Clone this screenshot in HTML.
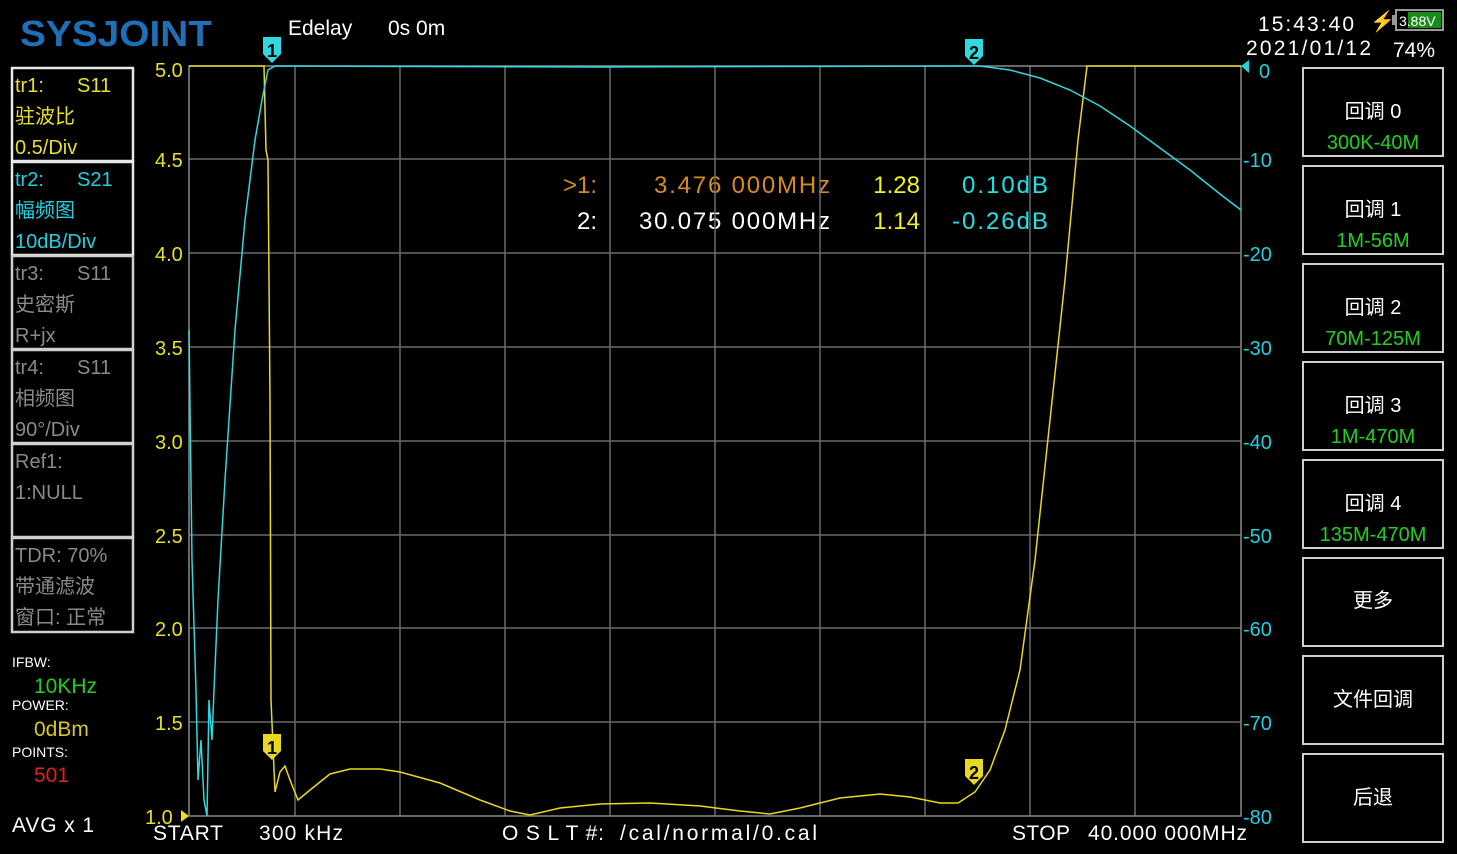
<!DOCTYPE html>
<html><head><meta charset="utf-8"><style>
html,body{margin:0;padding:0;background:#000;width:1457px;height:854px;overflow:hidden}
svg{display:block}
text{font-family:"Liberation Sans","Noto Sans CJK SC",sans-serif}
</style></head><body>
<svg width="1457" height="854" viewBox="0 0 1457 854" xmlns="http://www.w3.org/2000/svg">
<rect width="1457" height="854" fill="#000"/>
<text x="20" y="46" font-size="36" font-weight="bold" fill="#1f6fb8" textLength="192" lengthAdjust="spacingAndGlyphs">SYSJOINT</text>
<text x="288" y="35" font-size="21" fill="#fff">Edelay</text>
<text x="388" y="35" font-size="21" fill="#fff">0s 0m</text>
<text x="1258" y="31" font-size="21" fill="#fff" textLength="96">15:43:40</text>
<text x="1246" y="55" font-size="21" fill="#fff" textLength="125">2021/01/12</text>
<text x="1393" y="57" font-size="21" fill="#fff">74%</text>
<text x="1370" y="28" font-size="20" fill="#f5c020">⚡</text>
<rect x="1396" y="10" width="47" height="20" fill="none" stroke="#999" stroke-width="2"/>
<rect x="1392" y="15" width="4" height="10" fill="#999"/>
<rect x="1408" y="12" width="33" height="16" fill="#1a8a1a"/>
<text x="1399" y="26" font-size="14" fill="#fff">3.88V</text>

<g font-size="24">
<text x="597" y="193" text-anchor="end" fill="#d88a20">&gt;1:</text>
<text x="830" y="193" text-anchor="end" fill="#d88a20" textLength="176">3.476 000MHz</text>
<text x="920" y="193" text-anchor="end" fill="#f0f020">1.28</text>
<text x="1048" y="193" text-anchor="end" fill="#20e0e8" textLength="86">0.10dB</text>
<text x="597" y="229" text-anchor="end" fill="#fff">2:</text>
<text x="830" y="229" text-anchor="end" fill="#fff" textLength="191">30.075 000MHz</text>
<text x="920" y="229" text-anchor="end" fill="#f0f020">1.14</text>
<text x="1048" y="229" text-anchor="end" fill="#20e0e8" textLength="96">-0.26dB</text>
</g>

<g stroke="#6a6a6a" stroke-width="1.5">
<line x1="295" y1="66" x2="295" y2="816"/><line x1="400" y1="66" x2="400" y2="816"/>
<line x1="505" y1="66" x2="505" y2="816"/><line x1="610" y1="66" x2="610" y2="816"/>
<line x1="715" y1="66" x2="715" y2="816"/><line x1="820" y1="66" x2="820" y2="816"/>
<line x1="925" y1="66" x2="925" y2="816"/><line x1="1030" y1="66" x2="1030" y2="816"/>
<line x1="1135" y1="66" x2="1135" y2="816"/>
<line x1="189" y1="159" x2="1241" y2="159"/><line x1="189" y1="253" x2="1241" y2="253"/>
<line x1="189" y1="347" x2="1241" y2="347"/><line x1="189" y1="441" x2="1241" y2="441"/>
<line x1="189" y1="535" x2="1241" y2="535"/><line x1="189" y1="628" x2="1241" y2="628"/>
<line x1="189" y1="722" x2="1241" y2="722"/>
</g>
<rect x="189" y="66" width="1052" height="750" fill="none" stroke="#8a8a8a" stroke-width="1.5"/>

<g font-size="20" fill="#e8e020">
<text x="155" y="77">5.0</text><text x="155" y="167">4.5</text><text x="155" y="261">4.0</text>
<text x="155" y="355">3.5</text><text x="155" y="449">3.0</text><text x="155" y="543">2.5</text>
<text x="155" y="636">2.0</text><text x="155" y="730">1.5</text><text x="145" y="824">1.0</text>
</g>
<path d="M181 810 L189 816 L181 822Z" fill="#e8e020"/>
<g font-size="20" fill="#20d0e0">
<text x="1259" y="78">0</text><text x="1243" y="167">-10</text><text x="1243" y="261">-20</text>
<text x="1243" y="355">-30</text><text x="1243" y="449">-40</text><text x="1243" y="543">-50</text>
<text x="1243" y="636">-60</text><text x="1243" y="730">-70</text><text x="1243" y="824">-80</text>
</g>
<path d="M1249 60 L1241 66 L1249 73Z" fill="#20d0e0"/>

<path d="M189 66 L264 66 L266 150 L268 160 L270 400 L271 700 L275 792 L280 772 L285 766 L290 780 L298 800 L310 790 L330 774 L350 769 L380 769 L400 772 L440 783 L480 800 L510 811 L530 815 L560 808 L600 804 L650 803 L700 806 L740 811 L770 814 L800 808 L840 798 L880 794 L910 797 L940 803 L958 803 L975 792 L990 770 L1005 730 L1020 670 L1035 560 L1050 420 L1065 280 L1078 140 L1087 66 L1241 66" fill="none" stroke="#e8d820" stroke-width="1.5"/>
<path d="M189 330 L192 560 L196 690 L198 780 L201 740 L204 800 L207 816 L209 700 L212 740 L214 690 L218 600 L225 480 L235 330 L245 220 L255 140 L262 100 L268 70 L275 66 L600 67 L960 66 L980 66 L1010 70 L1040 78 L1070 90 L1100 106 L1130 126 L1160 148 L1190 170 L1220 194 L1241 210" fill="none" stroke="#30d8e0" stroke-width="1.5"/>

<g font-size="18" font-weight="bold" fill="#000" text-anchor="middle">
<path d="M263 37 h18 v17 l-9 9 l-9 -9z" fill="#30d8e0"/><text x="272" y="57">1</text>
<path d="M965 39 h18 v17 l-9 9 l-9 -9z" fill="#30d8e0"/><text x="974" y="59">2</text>
<path d="M263 734 h18 v17 l-9 9 l-9 -9z" fill="#e8d820"/><text x="272" y="754">1</text>
<path d="M965 759 h18 v17 l-9 9 l-9 -9z" fill="#e8d820"/><text x="974" y="779">2</text>
</g>

<g font-size="21" fill="#fff">
<text x="153" y="840" textLength="70">START</text><text x="259" y="840" textLength="84">300 kHz</text>
<text x="502" y="840" textLength="102">O S L T #:</text><text x="620" y="840" textLength="197">/cal/normal/0.cal</text>
<text x="1012" y="840" textLength="58">STOP</text><text x="1088" y="840" textLength="159">40.000 000MHz</text>
<text x="12" y="832" textLength="82">AVG x 1</text>
</g>

<g fill="none" stroke="#e8e8e8" stroke-width="2.5">
<rect x="12" y="68" width="121" height="93"/>
<rect x="12" y="162" width="121" height="93"/>
</g>
<g fill="none" stroke="#cfcfcf" stroke-width="2.5">
<rect x="12" y="256" width="121" height="93"/>
<rect x="12" y="350" width="121" height="93"/>
<rect x="12" y="444" width="121" height="93"/>
<rect x="12" y="538" width="121" height="94"/>
</g>
<g font-size="20">
<text x="15" y="92" fill="#e8e020">tr1:</text><text x="77" y="92" fill="#e8e020">S11</text>
<text x="15" y="123" fill="#e8e020">驻波比</text>
<text x="15" y="154" fill="#e8e020">0.5/Div</text>
<text x="15" y="186" fill="#20d0e0">tr2:</text><text x="77" y="186" fill="#20d0e0">S21</text>
<text x="15" y="217" fill="#20d0e0">幅频图</text>
<text x="15" y="248" fill="#20d0e0">10dB/Div</text>
<text x="15" y="280" fill="#8a8a8a">tr3:</text><text x="77" y="280" fill="#8a8a8a">S11</text>
<text x="15" y="311" fill="#8a8a8a">史密斯</text>
<text x="15" y="342" fill="#8a8a8a">R+jx</text>
<text x="15" y="374" fill="#8a8a8a">tr4:</text><text x="77" y="374" fill="#8a8a8a">S11</text>
<text x="15" y="405" fill="#8a8a8a">相频图</text>
<text x="15" y="436" fill="#8a8a8a">90°/Div</text>
<text x="15" y="468" fill="#8a8a8a">Ref1:</text>
<text x="15" y="499" fill="#8a8a8a">1:NULL</text>
<text x="15" y="562" fill="#8a8a8a">TDR: 70%</text>
<text x="15" y="593" fill="#8a8a8a">带通滤波</text>
<text x="15" y="624" fill="#8a8a8a">窗口: 正常</text>
</g>
<g font-size="14" fill="#fff">
<text x="12" y="667">IFBW:</text><text x="12" y="710">POWER:</text><text x="12" y="757">POINTS:</text>
</g>
<text x="34" y="693" font-size="21" fill="#20d020">10KHz</text>
<text x="34" y="736" font-size="21" fill="#d8c820">0dBm</text>
<text x="34" y="782" font-size="21" fill="#e02020">501</text>

<g fill="none" stroke="#d0d0d0" stroke-width="2">
<rect x="1303" y="68" width="140" height="88"/><rect x="1303" y="166" width="140" height="88"/>
<rect x="1303" y="264" width="140" height="88"/><rect x="1303" y="362" width="140" height="88"/>
<rect x="1303" y="460" width="140" height="88"/><rect x="1303" y="558" width="140" height="88"/>
<rect x="1303" y="656" width="140" height="88"/><rect x="1303" y="754" width="140" height="88"/>
</g>
<g font-size="20" text-anchor="middle">
<text x="1373" y="118" fill="#fff">回调 0</text><text x="1373" y="149" fill="#20d020">300K-40M</text>
<text x="1373" y="216" fill="#fff">回调 1</text><text x="1373" y="247" fill="#20d020">1M-56M</text>
<text x="1373" y="314" fill="#fff">回调 2</text><text x="1373" y="345" fill="#20d020">70M-125M</text>
<text x="1373" y="412" fill="#fff">回调 3</text><text x="1373" y="443" fill="#20d020">1M-470M</text>
<text x="1373" y="510" fill="#fff">回调 4</text><text x="1373" y="541" fill="#20d020">135M-470M</text>
<text x="1373" y="607" fill="#fff">更多</text>
<text x="1373" y="706" fill="#fff">文件回调</text>
<text x="1373" y="804" fill="#fff">后退</text>
</g>
</svg>
</body></html>
